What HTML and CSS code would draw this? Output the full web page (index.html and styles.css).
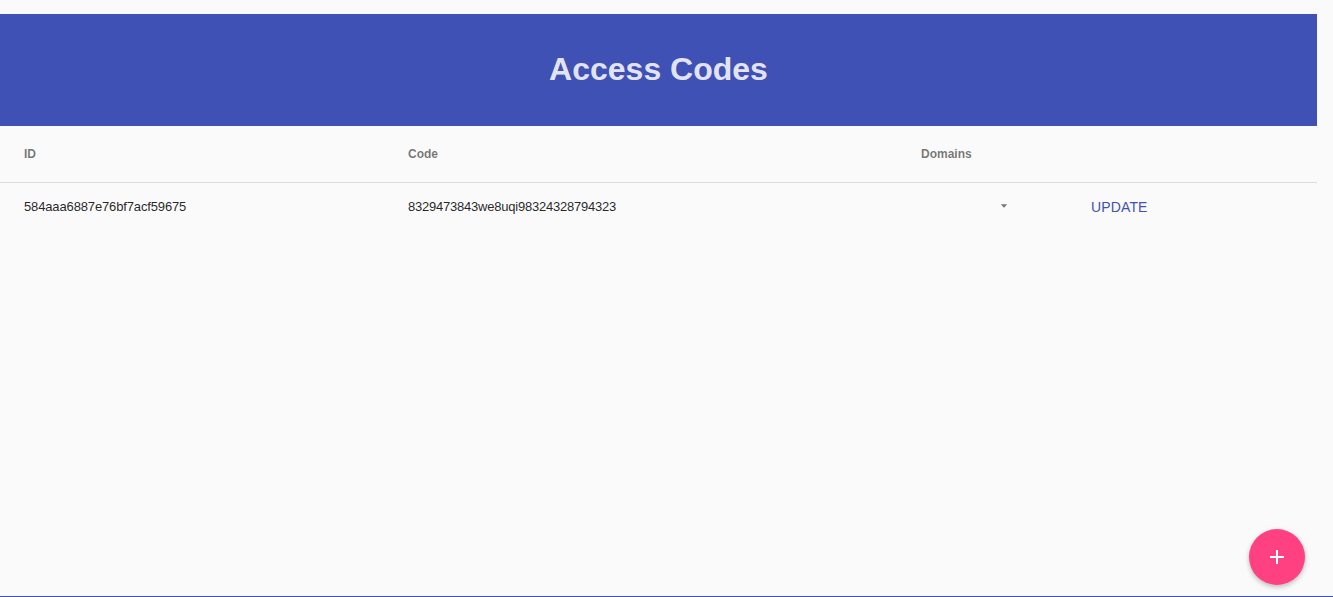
FILE: index.html
```html
<!DOCTYPE html>
<html lang="en">
<head>
<meta charset="utf-8">
<title>Access Codes</title>
<link rel="stylesheet" href="styles.css">
</head>
<body>
<main class="page">
  <header class="toolbar"><h1 class="toolbar-title">Access Codes</h1></header>
  <section class="table">
    <div class="row row-head">
      <span>ID</span><span>Code</span><span>Domains</span>
    </div>
    <div class="row row-body">
      <span class="cell-id">584aaa6887e76bf7acf59675</span>
      <span class="cell-code">8329473843we8uqi98324328794323</span>
      <span class="select"><svg class="caret" width="8" height="4" viewBox="0 0 8 4"><path fill="#757575" d="M.8 .3h6.4L4 3.7z"/></svg></span>
      <button class="update">UPDATE</button>
    </div>
  </section>
</main>
<button class="fab" aria-label="Add">
  <svg width="24" height="24" viewBox="0 0 24 24"><path fill="#fff" d="M19 13h-6v6h-2v-6H5v-2h6V5h2v6h6v2z"/></svg>
</button>
<div class="bottom-line"></div>
</body>
</html>
```
FILE: styles.css
```css
* { box-sizing: border-box; }
body {
  margin: 0;
  height: 597px;
  overflow: hidden;
  background: #fafafa;
  color: rgba(0, 0, 0, 0.87);
  font-family: "Liberation Sans", Arial, sans-serif;
}
.page { padding-top: 14px; width: 1317px; }
.toolbar {
  height: 112px;
  display: flex;
  align-items: center;
  justify-content: center;
  padding-bottom: 2px;
  background: #3f51b5;
}
.toolbar-title {
  margin: 0;
  color: rgba(255, 255, 255, 0.87);
  font-size: 32px;
  line-height: 40px;
}
.row {
  display: grid;
  grid-template-columns: 384px 513px 170px 1fr;
  align-items: center;
  padding-left: 24px;
}
.row-head {
  height: 57px;
  border-bottom: 1px solid rgba(0, 0, 0, 0.12);
  color: rgba(0, 0, 0, 0.54);
  font-size: 12px;
  font-weight: 700;
}
.row-body { height: 48px; font-size: 13px; }
.cell-id { padding-bottom: 2px; letter-spacing: -0.14px; }
.cell-code { padding-bottom: 2px; letter-spacing: -0.22px; }
.select { padding: 0 0 2px 79px; }
.caret { display: block; }
button { border: 0; padding: 0; font-family: inherit; }
.update {
  justify-self: start;
  background: none;
  color: #3f51b5;
  font-size: 14px;
  letter-spacing: 0.14px;
}
.fab {
  position: fixed;
  left: 1249px;
  top: 529px;
  width: 56px;
  height: 56px;
  display: grid;
  place-items: center;
  border-radius: 50%;
  background: #ff4081;
  box-shadow: 0 2px 5px rgba(0, 0, 0, 0.26);
}
.bottom-line {
  position: fixed;
  left: 0;
  right: 0;
  bottom: 0;
  height: 1px;
  background: #3f51b5;
}
```
